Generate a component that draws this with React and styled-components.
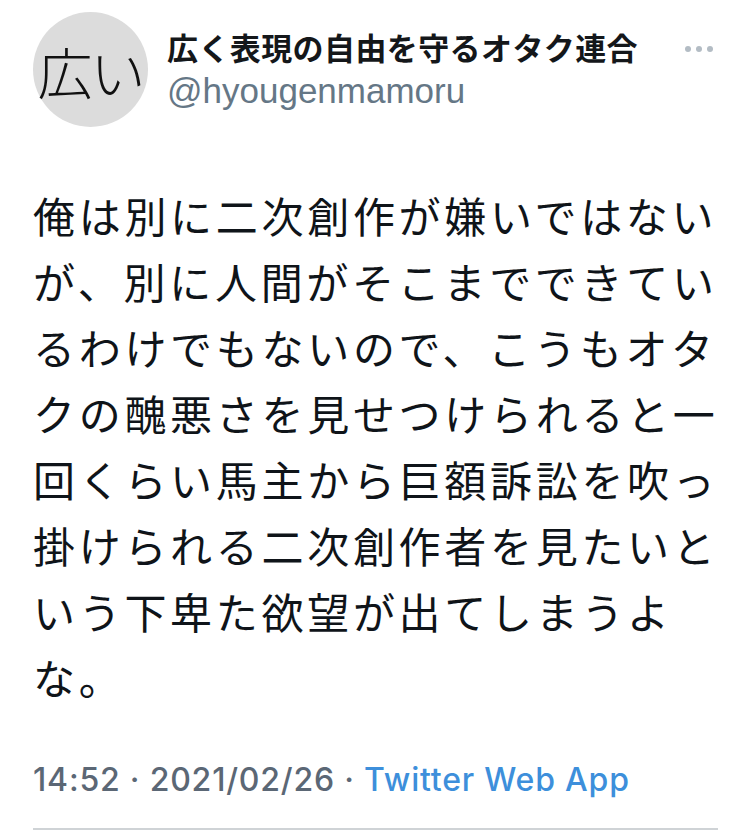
import styled, { createGlobalStyle } from 'styled-components';

const GlobalStyle = createGlobalStyle`
  html, body {
    margin: 0;
    padding: 0;
    background: #ffffff;
  }
  body {
    font-family: "Noto Sans CJK JP", "Noto Sans", sans-serif;
  }
`;

const TweetCard = styled.article`
  width: 750px;
  height: 832px;
  box-sizing: border-box;
  padding: 12px 32px 0 33px;
  display: flex;
  flex-direction: column;
  overflow: hidden;
`;

const Header = styled.header`
  display: flex;
  align-items: flex-start;
  gap: 19px;
`;

const Avatar = styled.div`
  width: 115px;
  height: 115px;
  flex-shrink: 0;
  border-radius: 50%;
  background: #dcdcdc;
  display: flex;
  align-items: center;
  justify-content: center;
  font-family: "Noto Sans CJK JP", sans-serif;
  font-weight: 300;
  font-size: 55px;
  color: #111;
  letter-spacing: -2px;
  white-space: nowrap;
`;

const Names = styled.div`
  flex: 1;
  display: flex;
  flex-direction: column;
  padding-top: 15px;
`;

const DisplayName = styled.div`
  font-family: "Noto Sans CJK JP", sans-serif;
  font-weight: 700;
  font-size: 31px;
  line-height: 40px;
  color: #14171a;
  letter-spacing: 0.4px;
`;

const Handle = styled.div`
  font-family: "Liberation Sans", "Noto Sans", sans-serif;
  font-size: 35px;
  line-height: 42px;
  color: #657786;
  margin-top: 3px;
`;

const MoreButton = styled.div`
  display: flex;
  gap: 5px;
  padding-top: 34px;
  padding-right: 5px;
`;

const Dot = styled.span`
  width: 6px;
  height: 6px;
  border-radius: 50%;
  background: #b3bcc4;
`;

const Body = styled.div`
  margin-top: 55px;
  font-family: "Noto Sans CJK JP", sans-serif;
  font-weight: 400;
  font-size: 42px;
  line-height: 66px;
  letter-spacing: 3.7px;
  color: #0f1419;
`;

const Line = styled.div`
  white-space: nowrap;
`;

const Meta = styled.div`
  margin-top: 53px;
  font-family: Inter, "Liberation Sans", sans-serif;
  font-weight: 500;
  font-size: 32px;
  line-height: 34px;
  letter-spacing: 0.8px;
  color: #5b6775;
  padding-bottom: 31px;
  border-bottom: 2px solid #cfd3d6;
  white-space: nowrap;
`;

const Source = styled.span`
  color: #3d8fdb;
`;

const lines = [
  '俺は別に二次創作が嫌いではない',
  'が、別に人間がそこまでできてい',
  'るわけでもないので、こうもオタ',
  'クの醜悪さを見せつけられると一',
  '回くらい馬主から巨額訴訟を吹っ',
  '掛けられる二次創作者を見たいと',
  'いう下卑た欲望が出てしまうよ',
  'な。',
];

export default function App() {
  return (
    <>
      <GlobalStyle />
      <TweetCard>
        <Header>
          <Avatar>広い</Avatar>
          <Names>
            <DisplayName>広く表現の自由を守るオタク連合</DisplayName>
            <Handle>@hyougenmamoru</Handle>
          </Names>
          <MoreButton>
            <Dot />
            <Dot />
            <Dot />
          </MoreButton>
        </Header>
        <Body>
          {lines.map((l, i) => (
            <Line key={i}>{l}</Line>
          ))}
        </Body>
        <Meta>
          14:52 · 2021/02/26 · <Source>Twitter Web App</Source>
        </Meta>
      </TweetCard>
    </>
  );
}
